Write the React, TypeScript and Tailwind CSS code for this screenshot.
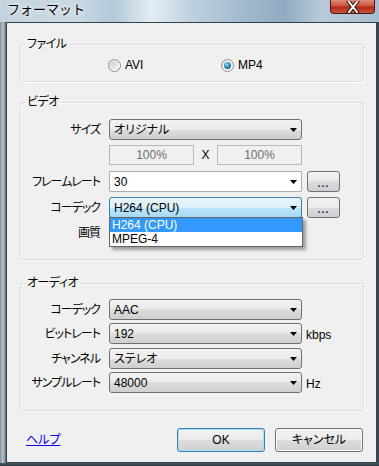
import React from "react";

type Variant = "normal" | "focus" | "edit";

function Arrow() {
  return (
    <svg width="7" height="4" viewBox="0 0 7 4" className="shrink-0">
      <polygon points="0,0 7,0 3.5,4" fill="#000" />
    </svg>
  );
}

function Combo({ text, variant = "normal" }: { text: string; variant?: Variant }) {
  const cls =
    variant === "focus"
      ? "border-[#3c7fb1] bg-[linear-gradient(180deg,#eaf6fd_0%,#d9f0fc_50%,#bee6fd_50%,#a7d9f5_100%)] rounded-[3px]"
      : variant === "edit"
      ? "border-[#abadb3] bg-white rounded-[1px]"
      : "border-[#707070] bg-[linear-gradient(180deg,#f2f2f2_0%,#ebebeb_50%,#dddddd_50%,#cfcfcf_100%)] rounded-[3px]";
  return (
    <div className={`w-[193px] h-[21px] border flex items-center pl-[4px] pr-[4px] shrink-0 ${cls}`}>
      <span className="flex-1 leading-[14px] text-black whitespace-nowrap">{text}</span>
      <Arrow />
    </div>
  );
}

function DotsButton() {
  return (
    <div className="w-[33px] h-[21px] ml-[5px] border border-[#707070] rounded-[3px] bg-[linear-gradient(180deg,#f2f2f2_0%,#ebebeb_50%,#dddddd_50%,#cfcfcf_100%)] flex items-center justify-center shrink-0">
      <span className="text-[#1b2a6b] font-bold leading-[10px] text-[11px] tracking-[1px] pt-[3px]">...</span>
    </div>
  );
}

function Label({ children }: { children: React.ReactNode }) {
  return (
    <div className="w-[80px] text-right pr-[1px] shrink-0 leading-[14px] text-black tracking-[-1px] whitespace-nowrap">
      {children}
    </div>
  );
}

function Radio({ checked }: { checked?: boolean }) {
  return (
    <div className="w-[13px] h-[13px] rounded-full border border-[#8e8f8f] bg-[linear-gradient(135deg,#e0e0e0,#ffffff_70%)] flex items-center justify-center shrink-0">
      {checked ? (
        <div className="w-[7px] h-[7px] rounded-full bg-[radial-gradient(circle_at_40%_35%,#9fdcfa,#1c6fa5_60%,#0d4a7a)]" />
      ) : (
        <div className="w-[9px] h-[9px] rounded-full bg-[linear-gradient(135deg,#cfcfcf,#f4f4f4)]" />
      )}
    </div>
  );
}

function Group({ title, children, className = "" }: { title: string; children: React.ReactNode; className?: string }) {
  return (
    <fieldset className={`border border-[#d5dfe5] rounded-[3px] shadow-[inset_1px_1px_0_#ffffff,1px_1px_0_#ffffff] ${className}`}>
      <legend className="ml-[4px] px-[2px] leading-[14px] text-black tracking-[-0.5px]">{title}</legend>
      {children}
    </fieldset>
  );
}

function PercentBox() {
  return (
    <div className="w-[85px] h-[20px] border border-[#b5b9bd] bg-[#f0f0f0] flex items-center justify-center text-[#6d6d6d] leading-[14px] shrink-0">
      100%
    </div>
  );
}

export default function App() {
  return (
    <div className="w-[379px] h-[466px] flex flex-col overflow-hidden font-['Liberation_Sans','Noto_Sans_CJK_JP',sans-serif] text-[12px] [font-feature-settings:'palt']">
      {/* title bar */}
      <div className="h-[22px] shrink-0 flex items-start bg-[linear-gradient(90deg,#c3d3df_0%,#c9d8e4_20%,#b4c8d8_30%,#e4edf4_40%,#c0d2e0_50%,#a6bdd0_62%,#90abc3_75%,#b9cbda_85%,#a8bdcf_100%)]">
        <div className="pl-[7px] pt-[1px] text-[13px] leading-[17px] text-black [font-feature-settings:normal] [text-shadow:0_0_6px_#ffffff,0_0_3px_#ffffff]">
          フォーマット
        </div>
        <div className="ml-auto mr-[4px] w-[45px] h-[14px] rounded-b-[4px] border border-t-0 border-[#4a1a12] bg-[linear-gradient(180deg,#e08a78_0%,#c8553e_45%,#b02a14_55%,#c9563a_100%)] flex items-center justify-center">
          <svg width="14" height="12" viewBox="0 0 14 12">
            <path d="M3 1 L11 11 M11 1 L3 11" stroke="#3a1a14" strokeWidth="4" strokeLinecap="square" />
            <path d="M3 1 L11 11 M11 1 L3 11" stroke="#ffffff" strokeWidth="2" strokeLinecap="square" />
          </svg>
        </div>
      </div>
      {/* body */}
      <div className="flex-1 flex">
        <div className="w-[6px] bg-[linear-gradient(90deg,#7d8c97_0%,#b3bfc8_40%,#9aa8b2_70%,#5a6873_100%)]" />
        <div className="flex-1 border border-[#33414d] bg-[#f0f0f0] flex flex-col pl-[13px] pr-[12px]">
          {/* File */}
          <Group title="ファイル" className="mt-[14px] pt-[6px] pb-[8px]">
            <div className="flex items-center h-[16px]">
              <div className="ml-[87px] w-[113px] flex items-center gap-[4px]">
                <Radio />
                <span className="leading-[14px]">AVI</span>
              </div>
              <div className="flex items-center gap-[4px]">
                <Radio checked />
                <span className="leading-[14px]">MP4</span>
              </div>
            </div>
          </Group>

          {/* Video */}
          <Group title="ビデオ" className="mt-[13px] pt-[10px] pb-[16px]">
            <div className="flex items-center h-[21px]">
              <Label>サイズ</Label>
              <div className="ml-[8px]">
                <Combo text="オリジナル" />
              </div>
            </div>
            <div className="flex items-center h-[20px] mt-[5px]">
              <div className="w-[88px] shrink-0" />
              <PercentBox />
              <div className="w-[23px] text-center leading-[14px]">X</div>
              <PercentBox />
            </div>
            <div className="flex items-center h-[21px] mt-[6px]">
              <Label>フレームレート</Label>
              <div className="ml-[8px] flex items-center">
                <Combo text="30" variant="edit" />
                <DotsButton />
              </div>
            </div>
            <div className="flex items-center h-[21px] mt-[5px]">
              <Label>コーデック</Label>
              <div className="ml-[8px] flex items-center relative">
                <Combo text="H264 (CPU)" variant="focus" />
                <DotsButton />
                <div className="absolute left-0 top-[20px] w-[194px] z-10 border border-[#646464] bg-white shadow-[3px_3px_3px_rgba(0,0,0,0.35)]">
                  <div className="h-[14px] bg-[#3399ff] text-white leading-[14px] pl-[2px]">H264 (CPU)</div>
                  <div className="h-[14px] text-black leading-[14px] pl-[2px]">MPEG-4</div>
                </div>
              </div>
            </div>
            <div className="flex items-center h-[21px] mt-[4px]">
              <Label>画質</Label>
            </div>
          </Group>

          {/* Audio */}
          <Group title="オーディオ" className="mt-[16px] pt-[9px] pb-[17px]">
            <div className="flex items-center h-[21px]">
              <Label>コーデック</Label>
              <div className="ml-[8px]">
                <Combo text="AAC" />
              </div>
            </div>
            <div className="flex items-center h-[21px] mt-[3px]">
              <Label>ビットレート</Label>
              <div className="ml-[8px] flex items-center">
                <Combo text="192" />
                <span className="ml-[4px] leading-[14px] pt-[2px]">kbps</span>
              </div>
            </div>
            <div className="flex items-center h-[21px] mt-[4px]">
              <Label>チャンネル</Label>
              <div className="ml-[8px]">
                <Combo text="ステレオ" />
              </div>
            </div>
            <div className="flex items-center h-[21px] mt-[3px]">
              <Label>サンプルレート</Label>
              <div className="ml-[8px] flex items-center">
                <Combo text="48000" />
                <span className="ml-[4px] leading-[14px] pt-[2px]">Hz</span>
              </div>
            </div>
          </Group>

          {/* buttons */}
          <div className="mt-[17px] flex items-center h-[24px]">
            <a className="ml-[6px] text-[#0000ee] underline leading-[14px] cursor-pointer">ヘルプ</a>
            <div className="ml-auto w-[88px] h-[24px] rounded-[3px] border border-[#3c7fb1] shadow-[inset_0_0_0_1px_#a6e1fb] bg-[linear-gradient(180deg,#f2f2f2_0%,#ebebeb_50%,#dddddd_50%,#cfcfcf_100%)] flex items-center justify-center leading-[14px]">
              OK
            </div>
            <div className="ml-[10px] mr-[1px] w-[88px] h-[24px] rounded-[3px] border border-[#707070] shadow-[inset_0_0_0_1px_#fcfcfc] bg-[linear-gradient(180deg,#f2f2f2_0%,#ebebeb_50%,#dddddd_50%,#cfcfcf_100%)] flex items-center justify-center leading-[14px]">
              キャンセル
            </div>
          </div>
        </div>
        <div className="w-[2px] bg-[#3b4955]" />
      </div>
      <div className="h-[3px] shrink-0 bg-[linear-gradient(180deg,#4a5864,#2c3640)]" />
    </div>
  );
}
